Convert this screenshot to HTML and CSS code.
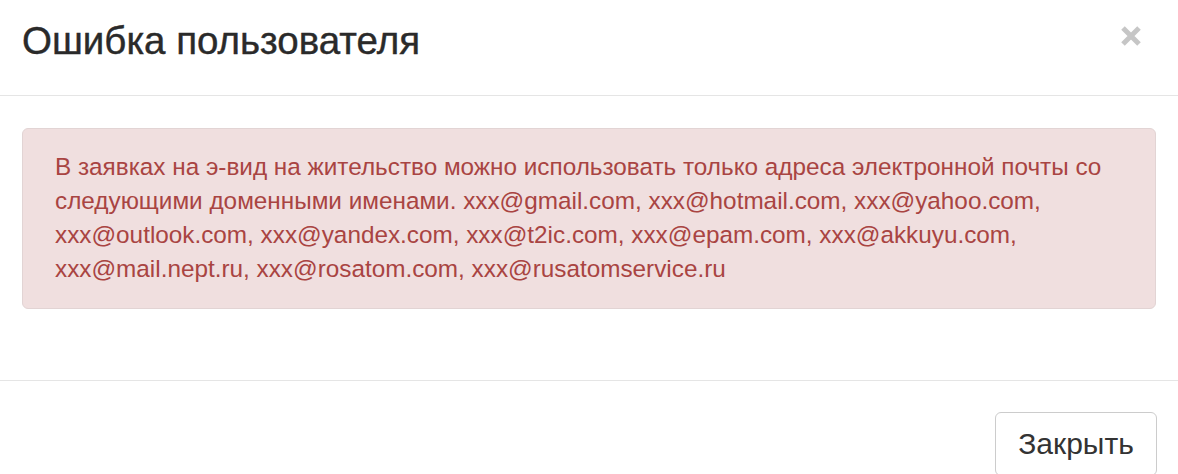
FILE: index.html
```html
<!DOCTYPE html>
<html lang="ru">
  <head>
    <meta charset="UTF-8" />
    <title>Ошибка пользователя</title>
    <link rel="stylesheet" href="styles.css">
  </head>
  <body>
    <div class="modal">
      <div class="modal-header">
        <h4 class="modal-title">Ошибка пользователя</h4>
        <button class="close" type="button" aria-label="Закрыть">
          <svg width="22" height="22" viewBox="0 0 22 22">
            <path d="M3 3 L19 19 M19 3 L3 19" stroke="#c6c6c6" stroke-width="5" />
          </svg>
        </button>
      </div>
      <div class="modal-body">
        <div class="alert">
          В заявках на э-вид на жительство можно использовать только адреса электронной почты со
          следующими доменными именами. xxx@gmail.com, xxx@hotmail.com, xxx@yahoo.com,
          xxx@outlook.com, xxx@yandex.com, xxx@t2ic.com, xxx@epam.com, xxx@akkuyu.com,
          xxx@mail.nept.ru, xxx@rosatom.com, xxx@rusatomservice.ru
        </div>
      </div>
      <div class="modal-footer">
        <button class="btn" type="button">Закрыть</button>
      </div>
    </div>
  </body>
</html>
```

FILE: styles.css
```css
body {
  margin: 0;
  font-family: "Liberation Sans", Arial, sans-serif;
  background: #fff;
  color: #333;
  overflow: hidden;
}
.modal-header {
  display: flex;
  align-items: center;
  justify-content: space-between;
  height: 95px;
  padding: 0 22px;
  border-bottom: 1px solid #e5e5e5;
}
.modal-title {
  margin: 0;
  font-size: 38.5px;
  font-weight: normal;
  color: #2a2a2a;
  padding-bottom: 14px;
  -webkit-text-stroke: 0.4px #2a2a2a;
}
.close {
  border: none;
  background: none;
  padding: 0;
  line-height: 0;
  margin-right: 14px;
  margin-bottom: 24px;
}
.modal-body {
  padding: 32px 22px 71px 22px;
}
.alert {
  background-color: #f0dfdf;
  border: 1px solid #e2d4d4;
  border-radius: 6px;
  color: #a94442;
  font-size: 24.3px;
  line-height: 34px;
  padding: 21px 32px 22px 32px;
}
.modal-footer {
  border-top: 1px solid #e5e5e5;
  padding: 31px 21px 0 0;
  display: flex;
  justify-content: flex-end;
}
.btn {
  font-family: "Liberation Sans", Arial, sans-serif;
  font-size: 30px;
  color: #333;
  background: #fff;
  border: 1px solid #ccc;
  border-radius: 6px;
  width: 162px;
  height: 64px;
  padding: 0;
}
```
